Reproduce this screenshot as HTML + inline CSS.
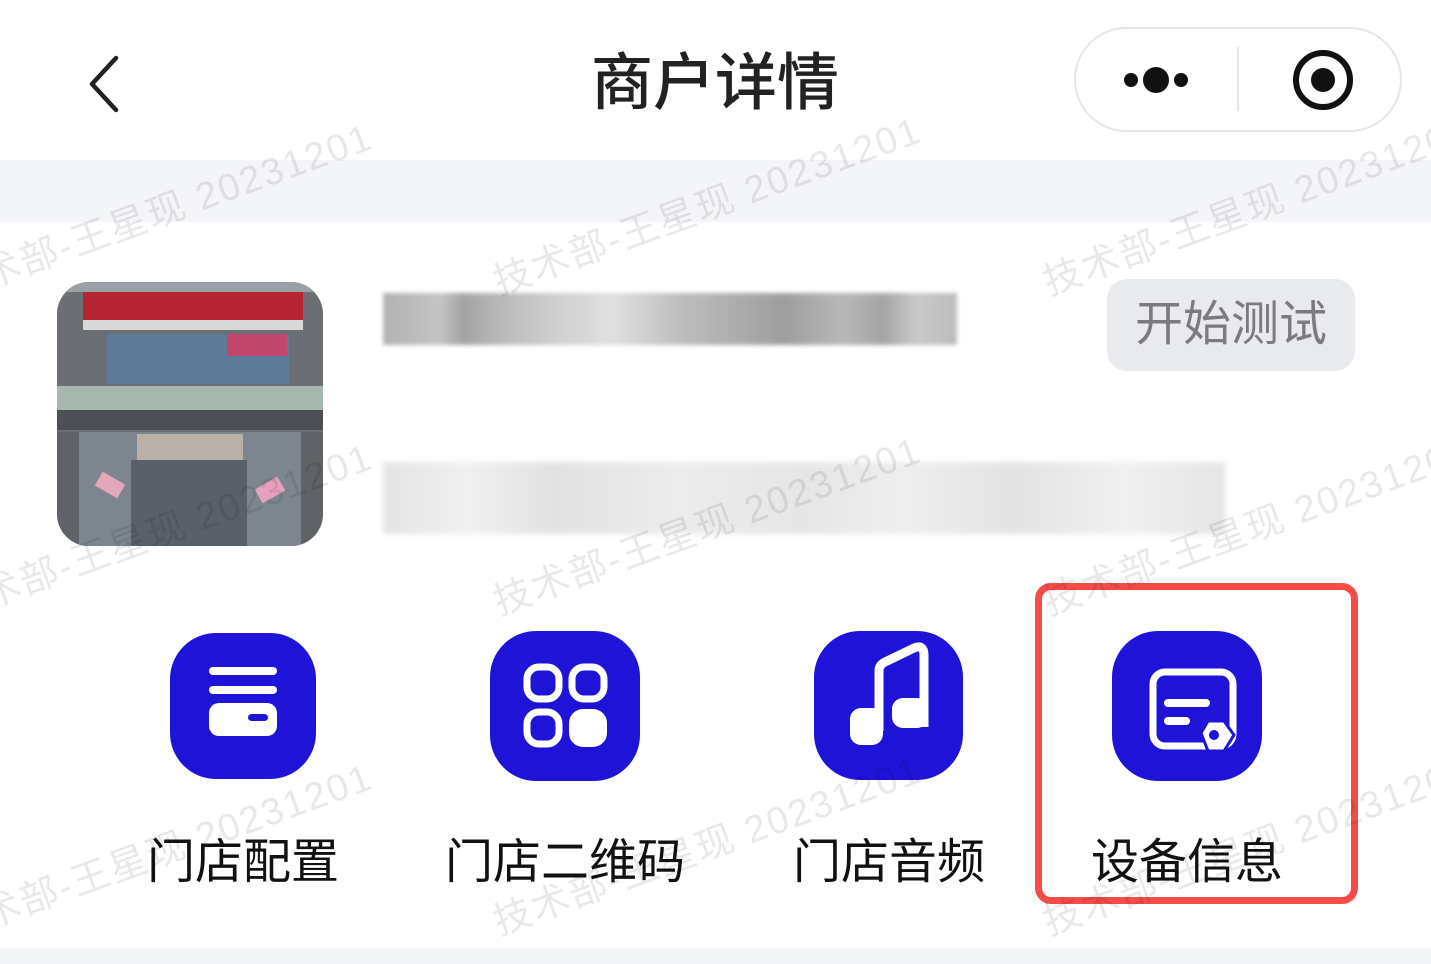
<!DOCTYPE html>
<html><head><meta charset="utf-8"><style>
*{margin:0;padding:0;box-sizing:border-box}
body{width:1431px;height:964px;background:#fff;position:relative;overflow:hidden;font-family:"Liberation Sans","Noto Sans CJK SC",sans-serif}
.a{position:absolute}
.icon{position:absolute;background:#1f13d8;border-radius:46px}
.lbl{position:absolute;top:822px;font-size:48px;color:#111;white-space:nowrap;text-align:center;width:300px}
.wm{position:absolute;color:rgba(0,0,0,0.09);font-size:38px;transform:rotate(-20deg);white-space:nowrap;letter-spacing:2px}
</style></head><body>
<div class="a" style="left:0;top:160px;width:1431px;height:62px;background:#f4f5f9"></div>
<div class="a" style="left:0;top:948px;width:1431px;height:16px;background:#f4f5f9"></div>

<svg class="a" style="left:80px;top:50px" width="50" height="70"><path d="M36 8 L12 34 L36 60" fill="none" stroke="#222" stroke-width="4.5" stroke-linecap="round" stroke-linejoin="round"/></svg>
<div class="a" style="left:505px;top:44px;width:420px;text-align:center;font-size:62px;font-weight:500;color:#222;line-height:80px">商户详情</div>
<div class="a" style="left:1074px;top:27px;width:328px;height:105px;border:2px solid #e6e6e6;border-radius:53px;background:#fff"></div>
<div class="a" style="left:1124px;top:73px;width:14px;height:14px;border-radius:50%;background:#111"></div>
<div class="a" style="left:1143px;top:67px;width:26px;height:26px;border-radius:50%;background:#111"></div>
<div class="a" style="left:1174px;top:73px;width:14px;height:14px;border-radius:50%;background:#111"></div>
<div class="a" style="left:1237px;top:47px;width:2px;height:64px;background:#e6e6e6"></div>
<div class="a" style="left:1293px;top:50px;width:60px;height:60px;border-radius:50%;border:6px solid #111"></div>
<div class="a" style="left:1311px;top:68px;width:24px;height:24px;border-radius:50%;background:#111"></div>

<!-- photo -->
<div class="a" style="left:57px;top:282px;width:266px;height:264px;border-radius:32px;overflow:hidden;background:#6b6f74">
 <div class="a" style="left:0;top:0;width:266px;height:10px;background:#9aa0a6"></div>
 <div class="a" style="left:26px;top:10px;width:220px;height:28px;background:#b52632"></div>
 <div class="a" style="left:26px;top:38px;width:220px;height:10px;background:#d9d9d9"></div>
 <div class="a" style="left:50px;top:52px;width:182px;height:50px;background:#5d7a98"></div>
 <div class="a" style="left:170px;top:52px;width:60px;height:22px;background:#c2476c"></div>
 <div class="a" style="left:0;top:104px;width:266px;height:24px;background:#a7b7b0"></div>
 <div class="a" style="left:0;top:128px;width:266px;height:20px;background:#4c4f53"></div>
 <div class="a" style="left:22px;top:150px;width:222px;height:114px;background:#7d868f"></div>
 <div class="a" style="left:80px;top:152px;width:106px;height:26px;background:#b9b0a8"></div>
 <div class="a" style="left:74px;top:178px;width:116px;height:86px;background:#59606a"></div>
 <div class="a" style="left:40px;top:195px;width:26px;height:16px;background:#e2a7b8;transform:rotate(30deg)"></div>
 <div class="a" style="left:200px;top:200px;width:26px;height:16px;background:#e7a0bd;transform:rotate(-30deg)"></div>
 <div class="a" style="left:0;top:150px;width:22px;height:114px;background:#5f6266"></div>
 <div class="a" style="left:244px;top:150px;width:22px;height:114px;background:#5f6266"></div>
</div>

<!-- blurred text -->
<div class="a" style="left:383px;top:293px;width:574px;height:52px;background:linear-gradient(90deg,#b2b2b2 0,#c4c4c4 10%,#a3a3a3 14%,#b8b8b8 20%,#cfcfcf 30%,#e0e0e0 40%,#bdbdbd 52%,#9e9e9e 70%,#b8b8b8 80%,#a5a5a5 87%,#c9c9c9 93%,#bcbcbc 100%);filter:blur(2px)"></div>
<div class="a" style="left:383px;top:462px;width:842px;height:72px;background:linear-gradient(90deg,#e4e4e4 0,#f0f0f0 10%,#e2e2e2 20%,#ececec 35%,#e6e6e6 50%,#eeeeee 62%,#e3e3e3 75%,#f0f0f0 88%,#e5e5e5 100%);filter:blur(3px)"></div>

<div class="a" style="left:1107px;top:279px;width:248px;height:92px;border-radius:20px;background:#e9eaee;color:#7b7b7d;font-size:48px;text-align:center;line-height:92px">开始测试</div>

<!-- icons -->
<div class="icon" style="left:170px;top:633px;width:146px;height:146px">
<svg width="146" height="146"><g fill="#fff"><rect x="39" y="34" width="68" height="8" rx="4"/><rect x="39" y="53" width="68" height="8" rx="4"/><rect x="39" y="70" width="68" height="33" rx="10"/></g><rect x="78" y="81" width="20" height="7" rx="3.5" fill="#1f13d8"/></svg></div>
<div class="icon" style="left:490px;top:631px;width:150px;height:150px">
<svg width="150" height="150"><g fill="none" stroke="#fff" stroke-width="7"><rect x="37" y="36" width="32" height="32" rx="12"/><rect x="82" y="36" width="32" height="32" rx="12"/><rect x="37" y="81" width="32" height="32" rx="12"/></g><rect x="79" y="78" width="38" height="38" rx="14" fill="#fff"/></svg></div>
<div class="icon" style="left:814px;top:631px;width:149px;height:149px">
<svg width="149" height="149"><path d="M65 100 V40 Q65 34 71 31 L100 17 Q110 13 110 24 V96" fill="none" stroke="#fff" stroke-width="9" stroke-linejoin="round"/><rect x="36" y="77" width="33" height="37" rx="11" fill="#fff"/><rect x="78" y="67" width="36" height="30" rx="11" fill="#fff"/></svg></div>
<div class="icon" style="left:1112px;top:631px;width:150px;height:150px">
<svg width="150" height="150"><rect x="41" y="41" width="80" height="74" rx="12" fill="none" stroke="#fff" stroke-width="7"/><rect x="52" y="68" width="46" height="8" rx="4" fill="#fff"/><rect x="52" y="86" width="26" height="8" rx="4" fill="#fff"/><path d="M89 102 L96 90 H112 L122 104 L112 120 H96 Z" fill="#fff" stroke="#1f13d8" stroke-width="3"/><circle cx="102" cy="104" r="5" fill="#1f13d8"/></svg></div>

<div class="lbl" style="left:93px">门店配置</div>
<div class="lbl" style="left:415px">门店二维码</div>
<div class="lbl" style="left:739px">门店音频</div>
<div class="lbl" style="left:1037px">设备信息</div>

<div class="a" style="left:1035px;top:583px;width:323px;height:321px;border:7px solid #f44c47;border-radius:16px"></div>

<!-- watermarks -->
<div class="wm" style="left:-30px;top:175px">术部-王星现 20231201</div>
<div class="wm" style="left:480px;top:175px">技术部-王星现 20231201</div>
<div class="wm" style="left:1030px;top:175px">技术部-王星现 20231201</div>
<div class="wm" style="left:-30px;top:495px">术部-王星现 20231201</div>
<div class="wm" style="left:480px;top:495px">技术部-王星现 20231201</div>
<div class="wm" style="left:1030px;top:495px">技术部-王星现 20231201</div>
<div class="wm" style="left:-30px;top:815px">术部-王星现 20231201</div>
<div class="wm" style="left:480px;top:815px">技术部-王星现 20231201</div>
<div class="wm" style="left:1030px;top:815px">技术部-王星现 20231201</div>
</body></html>
